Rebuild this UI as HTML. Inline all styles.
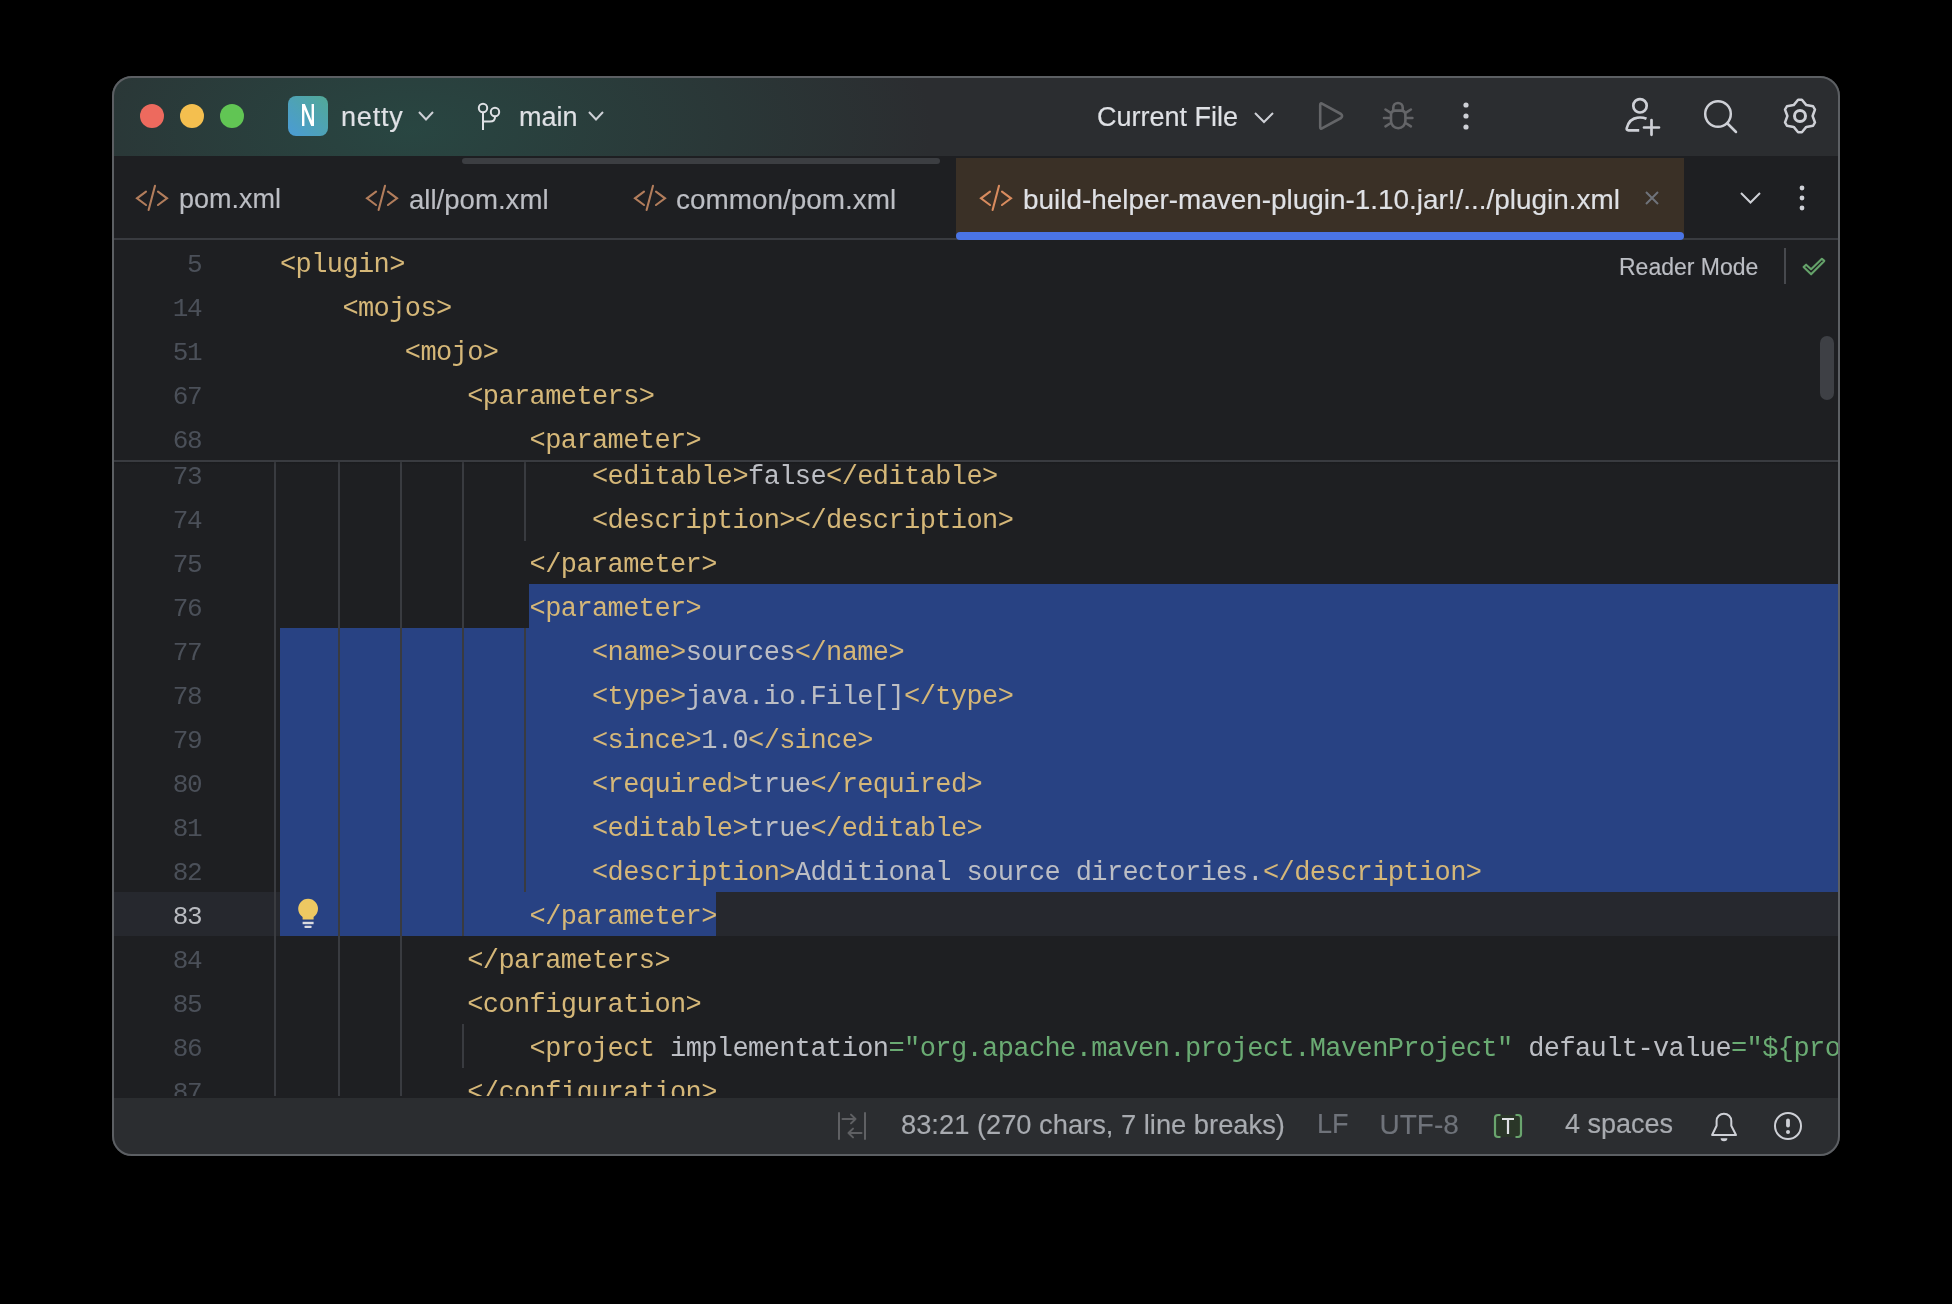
<!DOCTYPE html>
<html><head><meta charset="utf-8">
<style>
*{margin:0;padding:0;box-sizing:border-box}
html,body{width:1952px;height:1304px;background:#000;overflow:hidden}
body{position:relative;font-family:"Liberation Sans",sans-serif;-webkit-font-smoothing:antialiased}
#win{will-change:transform}
.abs{position:absolute}
#win{position:absolute;left:0;top:0;width:1952px;height:1304px;clip-path:inset(76px 112px 148px 112px round 20px)}
#title{left:112px;top:76px;width:1728px;height:80px;background:#2B2D30}
#titleglow{left:112px;top:76px;width:1728px;height:80px;background:radial-gradient(ellipse 520px 240px at 300px 55px, rgba(40,76,70,0.8) 0%, rgba(40,76,70,0.45) 45%, rgba(40,76,70,0) 100%)}
#tabs{left:112px;top:156px;width:1728px;height:84px;background:#1E1F22}
#editor{left:112px;top:240px;width:1728px;height:858px;background:#1E1F22}
#status{left:112px;top:1098px;width:1728px;height:58px;background:#2B2D30}
#border{left:112px;top:76px;width:1728px;height:1080px;border:2px solid #5C5F63;border-radius:20px}
.ui{position:absolute;font-family:"Liberation Sans",sans-serif;font-size:27px;-webkit-text-stroke:0.15px currentColor;white-space:nowrap;line-height:27px;height:27px}
.code{position:absolute;left:280px;font-family:"Liberation Mono",monospace;font-size:27px;letter-spacing:-0.6px;white-space:pre;line-height:44px;height:44px;padding-top:3px;color:#BCBEC4}
.ln{position:absolute;font-family:"Liberation Mono",monospace;font-size:26px;letter-spacing:-1.2px;white-space:pre;line-height:44px;height:44px;color:#4B5059;text-align:right;width:120px;left:81.5px;padding-top:3px}
.t{color:#D5B778}
.s{color:#6AAB73}
.g{position:absolute;width:2px;background:#393B40}
.sel{position:absolute;background:#284283}
svg{position:absolute;left:0;top:0}
</style></head>
<body>
<div id="win">
  <div id="title" class="abs"></div>
  <div id="titleglow" class="abs"></div>
  <div id="tabs" class="abs"></div>
  <div id="editor" class="abs"></div>
  <div id="status" class="abs"></div>
<div id="mainclip" class="abs" style="left:112px;top:462px;width:1728px;height:634px;overflow:hidden">
<div class="abs" style="left:-112px;top:-462px;width:1952px;height:1304px">
<div class="abs" style="left:113px;top:892px;width:1727px;height:44px;background:#26282E"></div>
<div class="sel" style="left:529px;top:584px;width:1311px;height:44px"></div>
<div class="sel" style="left:280px;top:628px;width:1560px;height:264px"></div>
<div class="sel" style="left:280px;top:892px;width:436px;height:44px"></div>
<div class="g" style="left:274px;top:452px;height:646px"></div>
<div class="g" style="left:338px;top:452px;height:646px"></div>
<div class="g" style="left:400px;top:452px;height:646px"></div>
<div class="g" style="left:462px;top:452px;height:484px"></div>
<div class="g" style="left:462px;top:1024px;height:44px"></div>
<div class="g" style="left:524px;top:452px;height:89px"></div>
<div class="g" style="left:524px;top:628px;height:264px"></div>
<div class="ln" style="top:452px">73</div>
<div class="code" style="top:452px;left:592.0px"><span class="t">&lt;editable&gt;</span>false<span class="t">&lt;/editable&gt;</span></div>
<div class="ln" style="top:496px">74</div>
<div class="code" style="top:496px;left:592.0px"><span class="t">&lt;description&gt;</span><span class="t">&lt;/description&gt;</span></div>
<div class="ln" style="top:540px">75</div>
<div class="code" style="top:540px;left:529.6px"><span class="t">&lt;/parameter&gt;</span></div>
<div class="ln" style="top:584px">76</div>
<div class="code" style="top:584px;left:529.6px"><span class="t">&lt;parameter&gt;</span></div>
<div class="ln" style="top:628px">77</div>
<div class="code" style="top:628px;left:592.0px"><span class="t">&lt;name&gt;</span>sources<span class="t">&lt;/name&gt;</span></div>
<div class="ln" style="top:672px">78</div>
<div class="code" style="top:672px;left:592.0px"><span class="t">&lt;type&gt;</span>java.io.File[]<span class="t">&lt;/type&gt;</span></div>
<div class="ln" style="top:716px">79</div>
<div class="code" style="top:716px;left:592.0px"><span class="t">&lt;since&gt;</span>1.0<span class="t">&lt;/since&gt;</span></div>
<div class="ln" style="top:760px">80</div>
<div class="code" style="top:760px;left:592.0px"><span class="t">&lt;required&gt;</span>true<span class="t">&lt;/required&gt;</span></div>
<div class="ln" style="top:804px">81</div>
<div class="code" style="top:804px;left:592.0px"><span class="t">&lt;editable&gt;</span>true<span class="t">&lt;/editable&gt;</span></div>
<div class="ln" style="top:848px">82</div>
<div class="code" style="top:848px;left:592.0px"><span class="t">&lt;description&gt;</span>Additional source directories.<span class="t">&lt;/description&gt;</span></div>
<div class="ln" style="top:892px;color:#B9BBC0">83</div>
<div class="code" style="top:892px;left:529.6px"><span class="t">&lt;/parameter&gt;</span></div>
<div class="ln" style="top:936px">84</div>
<div class="code" style="top:936px;left:467.2px"><span class="t">&lt;/parameters&gt;</span></div>
<div class="ln" style="top:980px">85</div>
<div class="code" style="top:980px;left:467.2px"><span class="t">&lt;configuration&gt;</span></div>
<div class="ln" style="top:1024px">86</div>
<div class="code" style="top:1024px;left:529.6px"><span class="t">&lt;project</span> implementation<span class="s">=&quot;org.apache.maven.project.MavenProject&quot;</span> default-value<span class="s">=&quot;${project}&quot;</span><span class="t">&gt;</span></div>
<div class="ln" style="top:1068px">87</div>
<div class="code" style="top:1068px;left:467.2px"><span class="t">&lt;/configuration&gt;</span></div>
</div></div>
<div class="abs" style="left:112px;top:240px;width:1728px;height:220px;background:#1E1F22"></div>
<div class="ln" style="top:240px">5</div>
<div class="code" style="top:240px;left:280.0px"><span class="t">&lt;plugin&gt;</span></div>
<div class="ln" style="top:284px">14</div>
<div class="code" style="top:284px;left:342.4px"><span class="t">&lt;mojos&gt;</span></div>
<div class="ln" style="top:328px">51</div>
<div class="code" style="top:328px;left:404.8px"><span class="t">&lt;mojo&gt;</span></div>
<div class="ln" style="top:372px">67</div>
<div class="code" style="top:372px;left:467.2px"><span class="t">&lt;parameters&gt;</span></div>
<div class="ln" style="top:416px">68</div>
<div class="code" style="top:416px;left:529.6px"><span class="t">&lt;parameter&gt;</span></div>
<div class="abs" style="left:112px;top:460px;width:1728px;height:2px;background:#393B40"></div>
<div class="abs" style="left:112px;top:462px;width:1728px;height:3px;background:linear-gradient(rgba(0,0,0,0.14),rgba(0,0,0,0))"></div>

  <!-- title texts -->
  <div class="ui" style="left:341px;top:104px;letter-spacing:0.8px;color:#DFE1E5">netty</div>
  <div class="ui" style="left:519px;top:104px;color:#DFE1E5">main</div>
  <div class="ui" style="left:1097px;top:104px;color:#DFE1E5">Current File</div>

  <!-- tabs -->
  <div class="abs" style="left:462px;top:158px;width:478px;height:6px;border-radius:3px;background:#3C3E42"></div>
  <div class="abs" style="left:956px;top:158px;width:728px;height:82px;background:#3A3026"></div>
  <div class="abs" style="left:112px;top:238px;width:1728px;height:2px;background:#393B40"></div>
  <div class="abs" style="left:956px;top:232px;width:728px;height:8px;border-radius:4px;background:#4A74E5"></div>
  <div class="ui" style="left:179px;top:186px;color:#BCBEC4">pom.xml</div>
  <div class="ui" style="left:409px;top:186px;font-size:27.6px;color:#BCBEC4">all/pom.xml</div>
  <div class="ui" style="left:676px;top:186px;font-size:27.9px;color:#BCBEC4">common/pom.xml</div>
  <div class="ui" style="left:1023px;top:186px;font-size:27.9px;color:#DFE1E5">build-helper-maven-plugin-1.10.jar!/.../plugin.xml</div>

  <!-- status bar texts -->
  <div class="ui" style="left:901px;top:1111px;font-size:27.3px;color:#A8ABB0">83:21 (270 chars, 7 line breaks)</div>
  <div class="ui" style="left:1317px;top:1111px;color:#6F737A">LF</div>
  <div class="ui" style="left:1379.5px;top:1111px;font-size:28px;color:#6F737A">UTF-8</div>
  <div class="ui" style="left:1565px;top:1111px;color:#A8ABB0">4 spaces</div>

  <!-- reader mode -->
  <div class="ui" style="left:1619px;top:254px;font-size:23px;color:#BCBEC4">Reader Mode</div>

  <svg width="1952" height="1304" viewBox="0 0 1952 1304" fill="none">
    <!-- traffic lights -->
    <circle cx="152" cy="116" r="12" fill="#ED6A5E"/>
    <circle cx="192" cy="116" r="12" fill="#F4BF4F"/>
    <circle cx="232" cy="116" r="12" fill="#61C554"/>
    <!-- project icon -->
    <defs>
      <linearGradient id="pg" x1="0" y1="1" x2="1" y2="0">
        <stop offset="0" stop-color="#4A9BD6"/>
        <stop offset="1" stop-color="#52A996"/>
      </linearGradient>
    </defs>
    <rect x="288" y="96" width="40" height="40" rx="8" fill="url(#pg)"/>
    <path d="M302 104 H304.9 L311.6 120.5 V104 H314 V126 H311.2 L304.4 109.5 V126 H302 Z" fill="#FFFFFF"/>
    <!-- chevrons -->
    <path d="M419 112 L426 119.5 L433 112" stroke="#CED0D6" stroke-width="2"/>
    <path d="M589 112 L596 119.5 L603 112" stroke="#CED0D6" stroke-width="2"/>
    <path d="M1255 113 L1264 122 L1273 113" stroke="#CED0D6" stroke-width="2"/>
    <!-- branch icon -->
    <circle cx="483" cy="108" r="4.2" stroke="#DFE1E5" stroke-width="2"/>
    <circle cx="495" cy="112" r="4.2" stroke="#DFE1E5" stroke-width="2"/>
    <path d="M483 112.5 V130 M495 116.2 V117 Q495 121.5 490 121.5 H483" stroke="#DFE1E5" stroke-width="2"/>
    <!-- play -->
    <path d="M1320.2 105 Q1320.2 102.6 1322.4 103.8 L1341 114 Q1343.2 116 1341 118 L1322.4 128.2 Q1320.2 129.4 1320.2 127 Z" stroke="#646568" stroke-width="2.6" stroke-linejoin="round"/>
    <!-- bug -->
    <g stroke="#646568" stroke-width="2.6" stroke-linecap="round" fill="none">
      <path d="M1393.3 110 V107.6 A4.7 4.7 0 0 1 1402.7 107.6 V110"/>
      <path d="M1391 114.8 Q1391 110.6 1395.2 110.6 H1401.2 Q1405.4 110.6 1405.4 114.8 V121 A7.2 7.2 0 0 1 1391 121 Z"/>
      <path d="M1385.5 109.5 L1390 112.3 M1410.9 109.5 L1406.4 112.3 M1384 118 H1390 M1412.4 118 H1406.4 M1385.5 126.3 L1390 123.5 M1410.9 126.3 L1406.4 123.5"/>
    </g>
    <!-- more -->
    <g fill="#CED0D6"><circle cx="1466" cy="105" r="2.6"/><circle cx="1466" cy="116" r="2.6"/><circle cx="1466" cy="127" r="2.6"/></g>
    <!-- add user -->
    <g stroke="#CED0D6" stroke-width="2.7" stroke-linecap="round" fill="none">
      <circle cx="1640" cy="105.8" r="6.7"/>
      <path d="M1639.2 130.3 H1628.5 Q1626.3 130.3 1626.8 128 Q1629.5 117.5 1640 117.5 Q1643.5 117.5 1646.5 118.8" stroke-linecap="butt"/>
      <path d="M1651.5 120 V134.8 M1644 127.5 H1659"/>
    </g>
    <!-- search -->
    <g stroke="#CED0D6" stroke-width="2.5" stroke-linecap="round">
      <circle cx="1718" cy="114" r="12.8"/>
      <path d="M1727.5 123.5 L1736 132"/>
    </g>
    <!-- gear -->
    <g stroke="#CED0D6" stroke-width="2.5" stroke-linejoin="round">
      <circle cx="1800" cy="116" r="5.5" stroke-width="3"/>
      <path d="M1798.10 99.80 L1801.90 99.80 L1806.30 105.09 L1813.08 106.25 L1814.98 109.55 L1812.60 116.00 L1814.98 122.45 L1813.08 125.75 L1806.30 126.91 L1801.90 132.20 L1798.10 132.20 L1793.70 126.91 L1786.92 125.75 L1785.02 122.45 L1787.40 116.00 L1785.02 109.55 L1786.92 106.25 L1793.70 105.09 Z"/>
    </g>

    <!-- tab icons -->
    <g stroke="#B27D5C" stroke-width="2.1" stroke-linecap="round" fill="none">
      <path d="M146 191.7 L137 198.3 L146 205 M155 185.8 L148.6 210 M158 191.7 L167 198.3 L158 205"/>
      <path d="M376 191.7 L367 198.3 L376 205 M385 185.8 L378.6 210 M388 191.7 L397 198.3 L388 205"/>
      <path d="M644 191.7 L635 198.3 L644 205 M653 185.8 L646.6 210 M656 191.7 L665 198.3 L656 205"/>
    </g>
    <g stroke="#D88B5E" stroke-width="2.1" stroke-linecap="round" fill="none">
      <path d="M990 191.7 L981 198.3 L990 205 M999 185.8 L992.6 210 M1002 191.7 L1011 198.3 L1002 205"/>
    </g>
    <!-- close -->
    <path d="M1646 192 L1658 204 M1658 192 L1646 204" stroke="#6F737A" stroke-width="2"/>
    <!-- tab chevron + more -->
    <path d="M1741 193 L1750.5 202.5 L1760 193" stroke="#CED0D6" stroke-width="2"/>
    <g fill="#CED0D6"><circle cx="1802" cy="188" r="2.4"/><circle cx="1802" cy="198" r="2.4"/><circle cx="1802" cy="208" r="2.4"/></g>


    <!-- bulb -->
    <path d="M302.6 919.5 V917 A9.9 9.9 0 1 1 313.6 917 V919.5 Z" fill="#EDC862"/>
    <rect x="302.6" y="921.8" width="11" height="2.4" fill="#DADBDF"/>
    <rect x="304.4" y="925.7" width="7.3" height="2.4" rx="1" fill="#DADBDF"/>
    <!-- reader mode separator + check -->
    <rect x="1784" y="248" width="2" height="36" fill="#47494E"/>
    <path d="M1803.6 267.1 L1806.1 264.7 L1811.1 269.2 L1821.9 258.8 L1824.3 260.9 L1811.1 274.3 Z" stroke="#65A26A" stroke-width="2.1" stroke-linejoin="round"/>
    <!-- scrollbar -->
    <rect x="1820" y="336" width="14" height="64" rx="7" fill="#3E4045"/>
    <!-- status: toggle icon -->
    <g stroke="#5F6063" stroke-width="2" stroke-linecap="round" stroke-linejoin="round">
      <path d="M839 1113 V1139 M865 1113 V1139"/>
      <path d="M842.5 1119 H855.5 M851 1114.6 L855.5 1119 L851 1123.4"/>
      <path d="M861.5 1133 H848.5 M853 1128.6 L848.5 1133 L853 1137.4"/>
    </g>
    <!-- [T] -->
    <rect x="1495" y="1115" width="26" height="22" fill="#2A3628"/>
    <g stroke="#6AA56E" stroke-width="2.2" fill="none" stroke-linecap="butt">
      <path d="M1500.5 1115 H1498 Q1495 1115 1495 1118 V1134 Q1495 1137 1498 1137 H1500.5"/>
      <path d="M1515.5 1115 H1518 Q1521 1115 1521 1118 V1134 Q1521 1137 1518 1137 H1515.5"/>
    </g>
    <path d="M1502 1119 H1514 M1508 1119 V1134" stroke="#DFE1E5" stroke-width="2.2"/>
    <!-- bell -->
    <g stroke="#CED0D6" stroke-width="2" stroke-linejoin="round" fill="none">
      <path d="M1716.6 1125.8 V1121 A7.35 7.35 0 0 1 1731.3 1121 V1125.8 L1736 1135 H1712.1 Z"/>
    </g>
    <path d="M1720.6 1138.2 H1727.4 A3.4 3 0 0 1 1720.6 1138.2 Z" fill="#CED0D6"/>
    <!-- warning circle -->
    <circle cx="1788" cy="1126" r="13" stroke="#CED0D6" stroke-width="2"/>
    <path d="M1788 1120.5 V1125.5" stroke="#CED0D6" stroke-width="3.8" stroke-linecap="round"/>
    <circle cx="1788" cy="1132" r="2" fill="#CED0D6"/>
  </svg>
</div>
<div id="border" class="abs"></div>
</body></html>
